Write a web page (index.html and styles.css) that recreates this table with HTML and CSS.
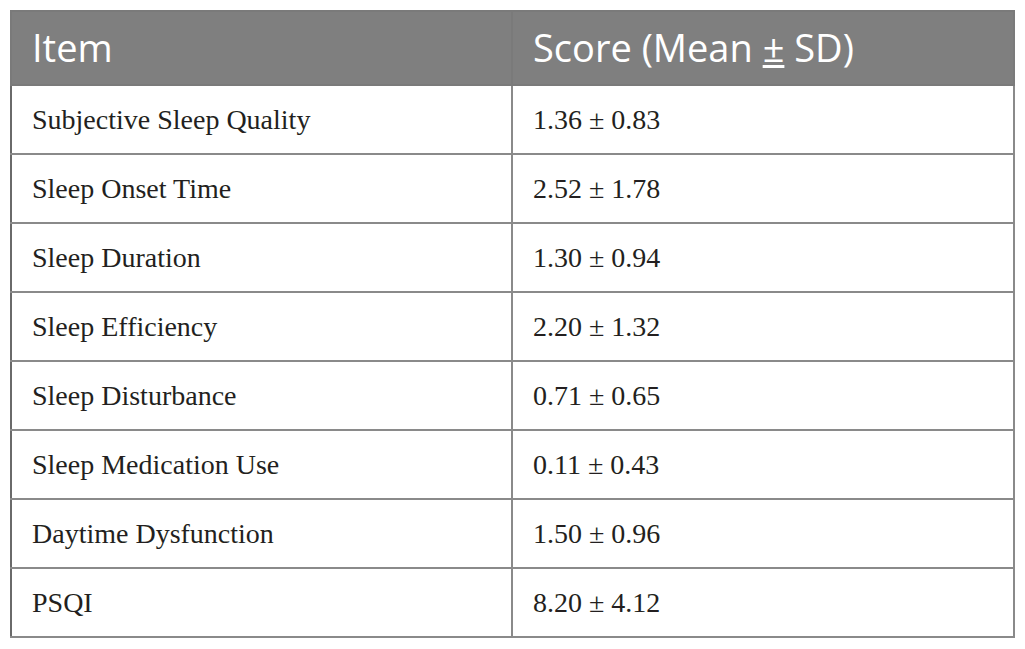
FILE: index.html
```html
<!DOCTYPE html>
<html>
<head>
<meta charset="utf-8">
<link rel="stylesheet" href="styles.css">
</head>
<body>
<table class="data">
  <thead>
    <tr><th class="c1">Item</th><th class="c2">Score (Mean <span class="pm">±</span> SD)</th></tr>
  </thead>
  <tbody>
    <tr><td>Subjective Sleep Quality</td><td>1.36 ± 0.83</td></tr>
    <tr><td>Sleep Onset Time</td><td>2.52 ± 1.78</td></tr>
    <tr><td>Sleep Duration</td><td>1.30 ± 0.94</td></tr>
    <tr><td>Sleep Efficiency</td><td>2.20 ± 1.32</td></tr>
    <tr><td>Sleep Disturbance</td><td>0.71 ± 0.65</td></tr>
    <tr><td>Sleep Medication Use</td><td>0.11 ± 0.43</td></tr>
    <tr><td>Daytime Dysfunction</td><td>1.50 ± 0.96</td></tr>
    <tr><td>PSQI</td><td>8.20 ± 4.12</td></tr>
  </tbody>
</table>
</body>
</html>
```
FILE: styles.css
```css
html, body {
  margin: 0;
  padding: 0;
  background: #ffffff;
}
body {
  padding: 10px 10px 0 10px;
}
.data {
  border-collapse: collapse;
  width: 1005px;
  table-layout: fixed;
}
.data th {
  background: #7f7f7f;
  color: #ffffff;
  font-family: "Open Sans", "DejaVu Sans", sans-serif;
  font-weight: 400;
  font-size: 38px;
  text-align: left;
  height: 74px;
  padding: 0 0 2px 20px;
  border: 2px solid #7a7a7a;
  box-sizing: border-box;
}
.data th.c1 { width: 501px; }
.pm { text-decoration: underline; text-underline-offset: 3px; }
.data td {
  font-family: "Liberation Serif", "Times New Roman", serif;
  font-size: 28px;
  color: #231f20;
  height: 69px;
  padding: 0 0 0 20px;
  border: 2px solid #8a8a8a;
  box-sizing: border-box;
}
.data tbody tr td:first-child { border-left-color: #6a6a6a; }
```
